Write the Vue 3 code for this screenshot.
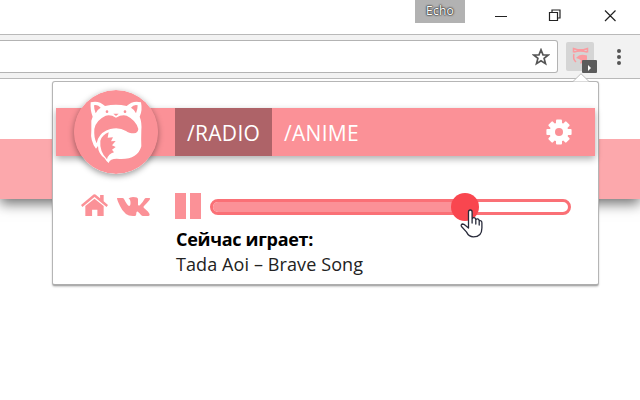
<script setup>
const progress = 71
</script>

<template>
  <div class="window">
    <header class="titlebar">
      <span class="profile">Echo</span>
      <svg class="controls" width="140" height="34" viewBox="0 0 140 34">
        <path d="M-5 16.500h12M49.500 12.500h8v8h-8zM52 12v-2h8v8h-2M105 10.500l10.500 10.500M115.500 10.500L105 21" />
      </svg>
    </header>
    <div class="toolbar">
      <div class="address">
        <svg class="star" width="18" height="18" viewBox="0 0 18 18"><path d="M9 1.800l2 5 5.300.2-4.200 3.400 1.400 5.200L9 12.700l-4.500 2.900 1.400-5.200L1.700 7 7 6.800z" /></svg>
      </div>
      <div class="extension">
        <svg width="28" height="28" viewBox="0 0 28 28">
          <path d="M7.500 10.500V6.500l4 1.300h6l4-1.300v4M8 10q6-2 13 0M8 12q-1.500 5 2 8" fill="none" stroke="#fb9ba0" stroke-width="1.500" />
          <path d="M10 16q4-5 11-2.500v4q-2 4-7 4l1-3-2-1.500z" fill="#fb9ba0" />
        </svg>
        <span class="badge"><i></i></span>
      </div>
      <div class="menu"><i></i><i></i><i></i></div>
    </div>
    <main class="page">
      <div class="band"></div>
    </main>

    <section class="popup">
      <svg class="arrow" width="16" height="9" viewBox="0 0 16 9"><path d="M0 8.500L8 .7l8 7.800" fill="#fff" stroke="#bcbcbc" /></svg>
      <nav class="nav">
        <svg class="logo" width="84" height="84" viewBox="71 36 252 252">
          <circle cx="197" cy="162" r="126" fill="#fb9197" />
          <path fill="#fff" d="M121 73Q145 66 164 84Q197 77 229 84Q248 66 272 73Q277 98 268 116Q275 133 273 157Q272 185 273 205Q262 245 208 243Q180 240 175 255Q169 252 163 241Q143 226 143 204L137 212Q119 190 123 157V128L127 116Q119 96 121 73Z" />
          <path fill="#fb9197" d="M131 82Q143 79 151 89Q140 95 136 106Q131 94 131 82ZM262 82Q250 79 242 89Q253 95 257 106Q262 94 262 82ZM132 153Q136 127 166 113Q181 109 197 119Q214 109 229 113Q258 127 264 153Q263 165 251 166Q235 166 227 159Q206 146 180 153Q154 160 143 182L139 196Q130 179 132 153ZM150 188Q155 171 175 163L172 179L188 178L182 190L196 189L185 202L196 207L185 215L191 223Q174 227 170 244Q147 220 150 188Z" />
          <g fill="#fb9197"><circle cx="170" cy="101" r="4" /><circle cx="224" cy="101" r="4" /><path d="M189 107h16l-8 7z" /></g>
        </svg>
        <a class="tab active">/RADIO</a>
        <a class="tab">/ANIME</a>
        <svg class="gear" width="26" height="26" viewBox="-13 -13 26 26">
          <g fill="#fff"><circle r="9.500" /><rect v-for="n in 4" :key="n" x="-3" y="-12.600" width="6" height="25.200" rx="1" :transform="`rotate(${n * 45})`" /></g>
          <circle r="4" fill="#fb9197" />
        </svg>
      </nav>
      <div class="player">
        <div class="links">
          <svg width="27" height="24" viewBox="0 0 28 24"><path d="M14 5.500L23.500 13v10.500H17V17h-5.500v6.500h-7V13zM0 12L13 1.200q1-.8 2 0L19.800 5V1.500h3.700v6.600L28 12l-1.500 2L14 3.800 1.500 14z" /></svg>
          <svg width="33" height="20" viewBox="0 0 33 20"><path d="M0 1h5.500q1 0 1.500 1 3 6 5 7 1.500 0 1.500-3 0-4-2-4.500Q13 0 16 0q5 0 5 2v6q1 1 2 0 3-3 4.500-6 .5-1 1.500-1h3.500q1 .5 0 2Q30 6 27 9q-1 1 0 2 5 4 5.500 6 .5 2-1.500 2h-5q-1 0-2-1-3-4-4-3.500-.8.500-.8 3-.2 1.500-1.700 1.500Q8 20 3 9 0 3 0 1z" /></svg>
        </div>
        <div class="main">
          <div class="seek">
            <div class="pause"><i></i><i></i></div>
            <div class="track">
              <div class="fill" :style="{ width: progress + '%' }"><b class="thumb"></b></div>
            </div>
          </div>
          <div class="now">Сейчас играет:</div>
          <div class="song">Tada Aoi – Brave Song</div>
        </div>
      </div>
    </section>
    <svg class="cursor" width="24" height="32" viewBox="0 0 24 32"><path d="M8.500 17V4q0-2 1.800-2t1.800 2v7q.5-1.500 2-1.300 1.600.2 1.700 2 .5-1 1.900-.8 1.500.3 1.500 2 2.700-.8 2.700 2v5q0 9-8.500 9-4.500 0-7-5L1.500 18.500q-1-2 1-2.500 1.500 0 3 1.500L8.500 20zM12.100 11v4M15.800 12v4M19.200 13v4" fill="#fff" stroke="#292b3b" stroke-width="1.300" stroke-linejoin="round" stroke-linecap="round" /></svg>
  </div>
</template>

<style>
body { margin: 0; overflow: hidden; }
</style>
<style scoped>
* { box-sizing: border-box; }
svg { display: block; flex: none; }
.window { position: relative; width: 640px; height: 400px; overflow: hidden; background: #fff; font-family: "Open Sans", "Noto Sans", sans-serif; }
.titlebar { height: 34px; display: flex; justify-content: flex-end; align-items: flex-start; gap: 35px; }
.profile { width: 50px; height: 23px; background: #b2b2b2; color: #fff; font-size: 12px; line-height: 22px; text-align: center; text-shadow: 0 0 1px #222, 0 0 2px #333, 0 0 2px #333; letter-spacing: .2px; }
.controls { fill: none; stroke: #222; stroke-width: 1.200; overflow: visible; }
.toolbar { height: 45px; border-top: 1px solid #b9b9b9; border-bottom: 1px solid #b9b9b9; background: #f2f2f2; display: flex; align-items: flex-start; padding-top: 5px; }
.address { width: 558px; height: 33px; border: 1px solid #b3b3b3; border-left: 0; border-radius: 0 3px 3px 0; background: #fff; display: flex; justify-content: flex-end; padding: 7px 7px 0 0; }
.star { fill: none; stroke: #555; stroke-width: 1.700; }
.extension { position: relative; width: 28px; height: 29px; margin: 2px 0 0 8px; border-radius: 2px; background: #d5d5d5; }
.badge { position: absolute; left: 16px; top: 18px; width: 15px; height: 13px; border-radius: 1px; background: #5c5c5c; display: flex; align-items: center; justify-content: center; }
.badge i { margin-top: 2px; border-left: 3px solid #fff; border-top: 3px solid transparent; border-bottom: 3px solid transparent; }
.menu { margin: 9px 0 0 23px; display: flex; flex-direction: column; gap: 2px; }
.menu i { width: 4px; height: 4px; border-radius: 50%; background: #555; }
.page { padding-top: 60px; }
.band { height: 60px; background: #fca8ac; box-shadow: 0 5px 12px rgba(0,0,0,.55); clip-path: inset(0 0 -30px 0); }
.popup { position: absolute; left: 52px; top: 81px; width: 547px; height: 205px; padding: 26px 3px 0 3px; background: #fff; border: 1px solid #b5b5b5; border-bottom: 2px solid #adadad; border-radius: 3px; box-shadow: 0 1px 2px rgba(0,0,0,.2); }
.arrow { position: absolute; left: 520px; top: -9px; }
.nav { height: 48px; display: flex; align-items: center; padding: 0 23px 0 18px; background: #fb9197; box-shadow: 0 3px 7px rgba(0,0,0,.32); }
.logo { border-radius: 50%; margin-right: 17px; box-shadow: 0 2px 6px rgba(0,0,0,.4); }
.tab { width: 97px; height: 48px; padding-left: 12px; color: #fff; font-size: 21px; line-height: 50px; letter-spacing: .3px; }
.active { background: #ae6368; }
.gear { margin-left: auto; }
.player { display: flex; padding: 37px 24px 0 25px; }
.links { display: flex; width: 94px; gap: 9px; align-items: flex-start; fill: #fb9197; }
.links svg + svg { margin-top: 4px; }
.main { flex: 1; }
.seek { display: flex; align-items: center; height: 26px; }
.pause { width: 35px; display: flex; gap: 4px; }
.pause i { width: 11px; height: 26px; background: #fb9197; }
.track { flex: 1; height: 16px; margin-top: 2px; border: 3px solid #fa7076; border-radius: 8px; background: #fff; }
.fill { position: relative; height: 100%; background: #fb9197; border-radius: 5px 0 0 5px; }
.thumb { position: absolute; right: -14px; top: -9px; width: 28px; height: 28px; border-radius: 50%; background: #f9464f; }
.now { padding-left: 1px; font-size: 18px; font-weight: 700; line-height: 26px; letter-spacing: -.3px; margin-top: 7px; color: #000; }
.song { padding-left: 1px; font-size: 18px; line-height: 25px; letter-spacing: .1px; color: #222; }
.cursor { position: absolute; left: 460px; top: 208px; }
</style>
